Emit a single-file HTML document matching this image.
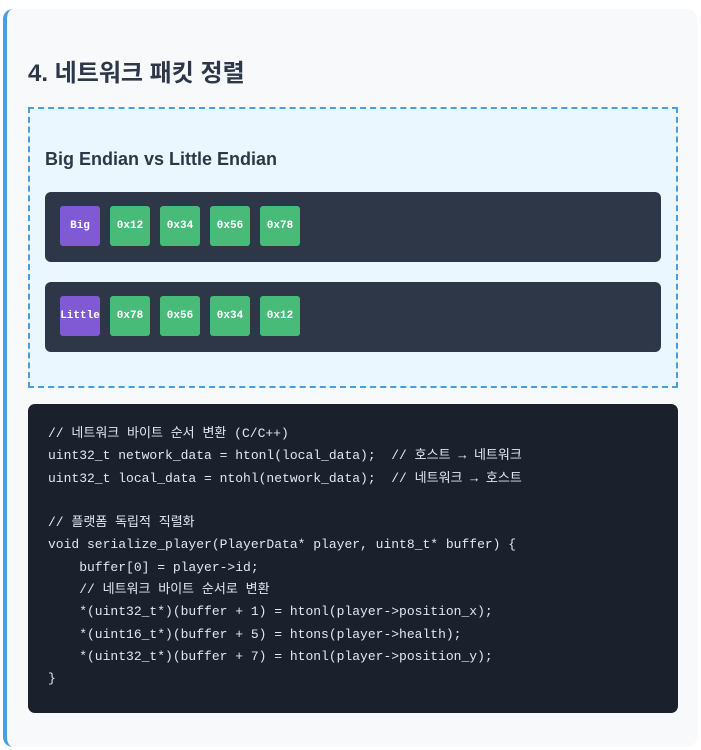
<!DOCTYPE html>
<html><head><meta charset="utf-8"><style>
body{margin:0;background:#fff;width:701px;height:750px;overflow:hidden;font-family:"Liberation Sans","Noto Sans CJK KR",sans-serif}
.card{position:absolute;left:3px;top:9px;width:690px;height:738px;background:#f7f9fb;border-left:4px solid #4a9ee0;border-radius:10px}
h2{position:absolute;left:21px;top:44px;margin:0;font-size:24px;font-weight:bold;color:#2d3748}
.dash{position:absolute;left:21px;top:98px;width:646px;height:277px;border:2px dashed #4a9ee0;background:#ebf7ff}
h3{position:absolute;left:15px;top:40px;margin:0;font-size:18px;font-weight:bold;color:#2d3748}
.row{position:absolute;left:15px;width:616px;height:70px;background:#2d3748;border-radius:6px}
.chip{position:absolute;top:14px;width:40px;height:40px;border-radius:3px;background:#48bb78;color:#fff;font:bold 11px "Liberation Mono",monospace;display:flex;align-items:center;justify-content:center}
.code{position:absolute;left:21px;top:395px;width:650px;height:309px;background:#1a202c;border-radius:7px}
pre{margin:0;position:absolute;left:20px;top:19px;font:13px/22.3px "Liberation Mono","Noto Sans CJK KR",monospace;color:#e2e8f0}
</style></head><body>
<div class="card">
<h2>4. 네트워크 패킷 정렬</h2>
<div class="dash">
<h3>Big Endian vs Little Endian</h3>
<div class="row" style="top:83px">
<div class="chip" style="left:15px;background:#805ad5">Big</div>
<div class="chip" style="left:65px">0x12</div>
<div class="chip" style="left:115px">0x34</div>
<div class="chip" style="left:165px">0x56</div>
<div class="chip" style="left:215px">0x78</div>
</div>
<div class="row" style="top:173px">
<div class="chip" style="left:15px;background:#805ad5">Little</div>
<div class="chip" style="left:65px">0x78</div>
<div class="chip" style="left:115px">0x56</div>
<div class="chip" style="left:165px">0x34</div>
<div class="chip" style="left:215px">0x12</div>
</div>
</div>
<div class="code"><pre>// 네트워크 바이트 순서 변환 (C/C++)
uint32_t network_data = htonl(local_data);  // 호스트 → 네트워크
uint32_t local_data = ntohl(network_data);  // 네트워크 → 호스트

// 플랫폼 독립적 직렬화
void serialize_player(PlayerData* player, uint8_t* buffer) {
    buffer[0] = player-&gt;id;
    // 네트워크 바이트 순서로 변환
    *(uint32_t*)(buffer + 1) = htonl(player-&gt;position_x);
    *(uint16_t*)(buffer + 5) = htons(player-&gt;health);
    *(uint32_t*)(buffer + 7) = htonl(player-&gt;position_y);
}</pre></div>
</div>
</body></html>
